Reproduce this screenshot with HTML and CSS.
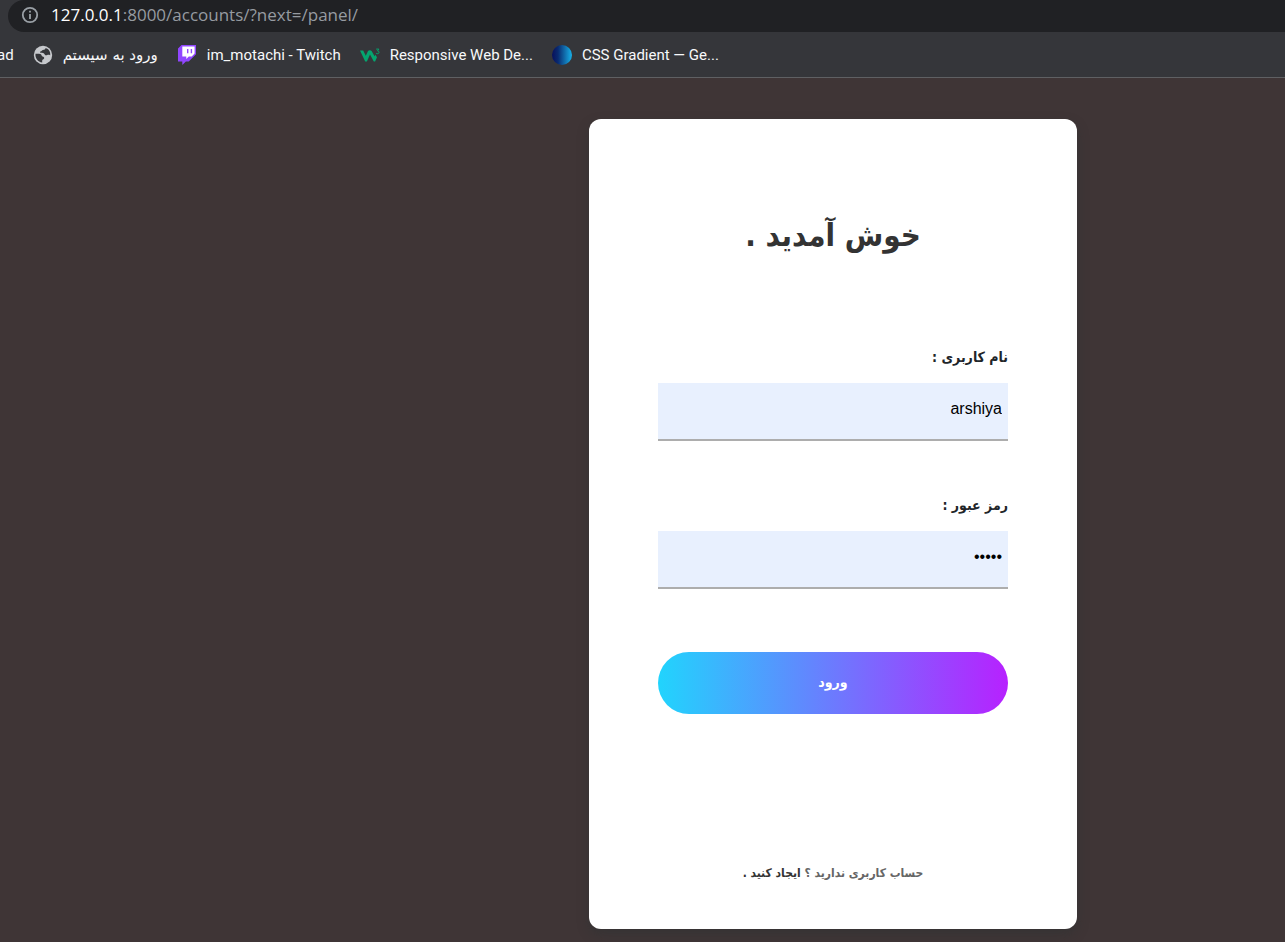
FILE: index.html
```html
<!DOCTYPE html>
<html lang="fa">
<head>
<meta charset="utf-8">
<meta name="viewport" content="width=device-width, initial-scale=1">
<title>ورود به سیستم</title>
<link rel="stylesheet" href="styles.css">
</head>
<body>
<header class="browser">
  <div class="address">
    <svg class="info" viewBox="0 0 18 18" width="18" height="18" aria-hidden="true"><circle cx="9" cy="9" r="7.2" fill="none" stroke="#9aa0a6" stroke-width="1.8"/><path d="M9 8v5M9 4.800v1.800" stroke="#9aa0a6" stroke-width="1.8"/></svg>
    <span class="url" dir="ltr"><span class="host">127.0.0.1</span>:8000/accounts/?next=/panel/</span>
  </div>
  <nav class="bookmarks">
    <a class="bookmark" href="#">ad</a>
    <a class="bookmark" href="#">
      <svg viewBox="0 0 20 20" width="20" height="20" aria-hidden="true"><circle cx="10" cy="10" r="9.2" fill="#c6c8cc"/><path d="M2.500 8.800c1.500-.3 3.300-.2 4.800.3 1.600.5 1 1.900 2.200 2.400 1.300.4 2 1 1.600 2.100-.4 1-1.700.9-1.900 2-.1.700.1 1.300 0 1.900C4.900 17.100 1.900 13 2.500 8.800zM12.600 3c-.3 1.500-1.200 1.900-2.600 2-1.200.1-1.200 1.300-2.500 1.500-.8.200-.7 1.200.2 1.300 1.700.1 3.300.2 4 1.600.5 1 1.700 1 2.600.6 1-.4 2-.1 2.900.2C17.600 6.900 15.900 4 12.600 3z" fill="#35363a"/></svg>
      <span class="persian" dir="rtl">ورود به سیستم</span>
    </a>
    <a class="bookmark" href="#">
      <svg viewBox="0 0 20 20" width="20" height="20" aria-hidden="true"><path d="M4.500 0 1 3.600v12.800h4.300V20l3.600-3.600h2.800L19 9.300V0z" fill="#9146ff"/><path d="M5.300 1.400h12.300v7.200l-2.900 2.900h-2.900l-2.500 2.500v-2.500h-4z" fill="#fff"/><path d="M10 3.900h1.400v4.300H10zM13.700 3.900h1.400v4.300h-1.400z" fill="#9146ff"/></svg>
      <span>im_motachi - Twitch</span>
    </a>
    <a class="bookmark" href="#">
      <svg viewBox="0 0 20 20" width="20" height="20" aria-hidden="true"><path d="M0 5.500h3.200l2.600 5.200L8 6c.8-1 2.800-1 3.600 0l3 5.200.8-1.500 1.600 2.500-1.900 4.400h-1.300L10 9.500l-3.100 7.100H5.200z" fill="#04a56f"/><path d="M16.200 4.100h2.700L17.500 5.900c2.200.1 1.900 2.900-.1 2.800-.6 0-1-.2-1.400-.6" fill="none" stroke="#04a56f" stroke-width="1"/></svg>
      <span>Responsive Web De...</span>
    </a>
    <a class="bookmark" href="#">
      <svg viewBox="0 0 20 20" width="20" height="20" aria-hidden="true"><defs><linearGradient id="disc"><stop offset="0" stop-color="#08105c"/><stop offset=".3" stop-color="#092a70"/><stop offset="1" stop-color="#18b2ea"/></linearGradient></defs><circle cx="10" cy="10" r="10" fill="url(#disc)"/></svg>
      <span>CSS Gradient — Ge...</span>
    </a>
  </nav>
</header>
<main class="page">
  <form class="card" dir="rtl">
    <h1 class="title">خوش آمدید .</h1>
    <div class="field">
      <label class="label" for="username">نام کاربری :</label>
      <input class="input" id="username" type="text" value="arshiya">
    </div>
    <div class="field">
      <label class="label" for="password">رمز عبور :</label>
      <input class="input" id="password" type="password" value="12345">
    </div>
    <button class="submit" type="button">ورود</button>
    <p class="signup">حساب کاربری ندارید ؟ <a class="signup-link" href="#">ایجاد کنید .</a></p>
  </form>
</main>
</body>
</html>
```
FILE: styles.css
```css
* {
  box-sizing: border-box;
}

body {
  margin: 0;
  min-height: 100vh;
  display: flex;
  flex-direction: column;
  background: #3f3536;
  font-family: "DejaVu Sans Condensed", "DejaVu Sans", sans-serif;
}

.browser {
  background: #35363a;
  border-bottom: 1px solid #5f6063;
}

.address {
  display: flex;
  align-items: center;
  gap: 12px;
  height: 32px;
  margin-left: 8px;
  padding: 0 13px 3px;
  border-bottom-left-radius: 16px;
  border-top-left-radius: 16px;
  background: #202124;
}

.url {
  color: #969ba1;
  font-family: "Open Sans", sans-serif;
  font-size: 17px;
  line-height: 24px;
}

.host {
  color: #fff;
}

.bookmarks {
  display: flex;
  align-items: center;
  gap: 19px;
  height: 45px;
  margin-left: -3px;
  overflow: hidden;
}

.bookmark {
  display: flex;
  align-items: center;
  gap: 10px;
  color: #f8f9fa;
  font-family: Roboto, "Open Sans", sans-serif;
  font-size: 15px;
  text-decoration: none;
  white-space: nowrap;
}

.persian {
  font-family: "DejaVu Sans", sans-serif;
}

.page {
  flex: 1;
  display: grid;
  grid-template-columns: 589fr minmax(320px, 488px) 208fr;
  padding: 41px 0 13px;
}

.card {
  grid-column: 2;
  display: flex;
  flex-direction: column;
  padding: 92px 69px 46px;
  border-radius: 12px;
  background: #fff;
  box-shadow: 0 5px 12px rgba(40, 50, 50, 0.4);
}

.title {
  margin: 0 0 84px;
  color: #333;
  font-size: 31px;
  line-height: 48px;
  text-align: center;
}

.field {
  display: flex;
  flex-direction: column;
  gap: 12px;
  margin-bottom: 50px;
}

.label {
  color: #212529;
  font-size: 14px;
  font-weight: bold;
  line-height: 28px;
}

.input {
  width: 100%;
  height: 58px;
  padding: 0 6px 5px;
  border: 0;
  border-bottom: 2px solid #adadad;
  border-radius: 0;
  outline: 0;
  background: #e8f0fe;
  color: #000;
  font-family: "Liberation Sans", sans-serif;
  font-size: 16px;
}

.submit {
  height: 62px;
  margin: 13px 0 0;
  padding: 0 0 2px;
  border: 0;
  border-radius: 31px;
  background: linear-gradient(to right, #21d4fd, #b721ff);
  color: #fff;
  font-family: inherit;
  font-size: 14px;
  font-weight: bold;
}

.signup {
  margin: auto 0 0;
  color: #666;
  font-size: 12px;
  font-weight: bold;
  line-height: 20px;
  text-align: center;
}

.signup-link {
  color: #333;
  text-decoration: none;
}
```
